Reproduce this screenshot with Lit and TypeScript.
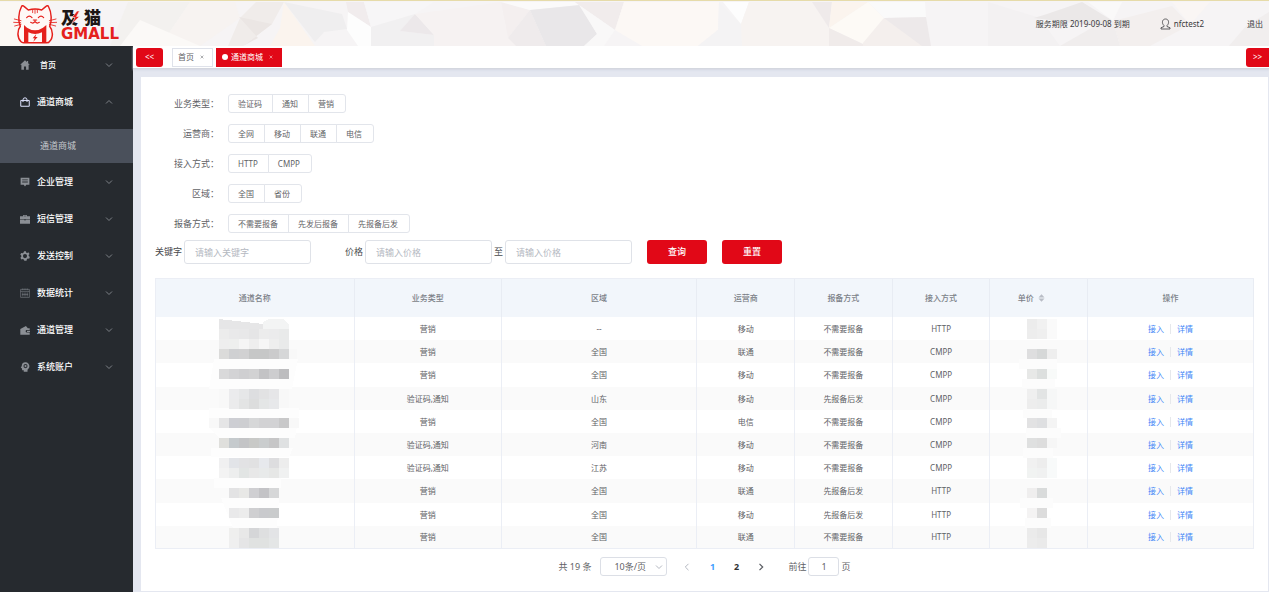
import { LitElement, html, svg, css } from "lit";
import { customElement, state } from "lit/decorators.js";
import { classMap } from "lit/directives/class-map.js";

const chevron = (cls: string) => html`<svg class=${cls} viewBox="0 0 8 8" aria-hidden="true">
  <path d="M1 2.5 L4 5.5 L7 2.5" fill="none" stroke="currentColor" stroke-width="1" />
</svg>`;

const icons = {
  home: svg`<path d="M8 0.5 L0.3 7.5 H2.2 V15.5 H6.3 V10.5 H9.7 V15.5 H13.8 V7.5 H15.7 L13 5 V1.5 H11 V3.2 Z"/>`,
  bag: svg`<path fill="none" stroke="#dfe3ff" stroke-width="1.6" d="M1.2 5.5 H14.8 V14.8 H1.2 Z M4.8 8 V4.5 A3.2 3.2 0 0 1 11.2 4.5 V8"/>`,
  board: svg`<path fill-rule="evenodd" d="M1 1 H15 V12.5 H10 L8 15 L6 12.5 H1 Z M3.5 4 V5.3 H12.5 V4 Z M3.5 7.3 V8.6 H12.5 V7.3 Z"/>`,
  case: svg`<path fill-rule="evenodd" d="M5 3.5 V1.5 H11 V3.5 H16 V8.4 H0 V3.5 Z M6.3 2.6 V3.5 H9.7 V2.6 Z M0 9 H6.5 V10 H9.5 V9 H16 V15.5 H0 Z"/>`,
  gear: svg`<path fill-rule="evenodd" d="M6.5 0.5 H9.5 L10 2.6 L11.6 3.3 L13.4 2.1 L15.2 4.6 L13.7 6.2 L14 8 L15.8 9.4 L14.6 12.2 L12.4 12 L11 13.3 L10.4 15.6 H7 L6 13.5 L4.4 12.7 L2.2 13.4 L0.6 10.8 L2.1 9.2 L2 7.2 L0.4 5.6 L2 3 L4.2 3.4 L5.8 2.5 Z M8 4.8 A3.3 3.3 0 1 0 8 11.4 A3.3 3.3 0 1 0 8 4.8 Z"/>`,
  sheet: svg`<path fill="none" stroke="currentColor" stroke-width="1.1" opacity="0.75" d="M1 2.2 H15 V15 H1 Z M1 5.4 H15 M4.5 0.6 V3.5 M8 0.6 V3.5 M11.5 0.6 V3.5 M4.5 7 V13.5 M8 7 V13.5 M11.5 7 V13.5 M3 10.2 H13"/>`,
  wallet: svg`<path d="M0.500 6.500 L9.5 1.500 L12.5 5 H15.500 V8 H11 A2 2 0 0 0 11 12 H15.500 V15.500 H0.500 Z M11.2 9 H16 V11 H11.2 Z"/>`,
  head: svg`<path fill-rule="evenodd" d="M8.5 0.5 A6 6 0 0 1 15 7 C15 10 12.5 11 12 12.5 V15.5 H6 V13 H3.5 L3 10 L1.2 9.3 L2.8 6.5 A6 6 0 0 1 8.5 0.5 Z M8.8 3.2 A3.3 3.3 0 1 0 8.8 9.8 A3.3 3.3 0 1 0 8.8 3.2 Z M8.8 4.8 A1.7 1.7 0 1 1 8.8 8.2 A1.7 1.7 0 1 1 8.8 4.8 Z"/>`,
};

const menu = [
  { label: "首页", icon: icons.home, compact: true },
  { label: "通道商城", icon: icons.bag, children: ["通道商城"] },
  { label: "企业管理", icon: icons.board },
  { label: "短信管理", icon: icons.case },
  { label: "发送控制", icon: icons.gear },
  { label: "数据统计", icon: icons.sheet },
  { label: "通道管理", icon: icons.wallet },
  { label: "系统账户", icon: icons.head },
] as { label: string; icon: unknown; compact?: boolean; children?: string[] }[];

const filters: [string, string[]][] = [
  ["业务类型：", ["验证码", "通知", "营销"]],
  ["运营商：", ["全网", "移动", "联通", "电信"]],
  ["接入方式：", ["HTTP", "CMPP"]],
  ["区域：", ["全国", "省份"]],
  ["报备方式：", ["不需要报备", "先发后报备", "先报备后发"]],
];

const rows: string[][] = [
  ["营销", "--", "移动", "不需要报备", "HTTP"],
  ["营销", "全国", "联通", "不需要报备", "CMPP"],
  ["营销", "全国", "移动", "不需要报备", "CMPP"],
  ["验证码,通知", "山东", "移动", "先报备后发", "CMPP"],
  ["营销", "全国", "电信", "不需要报备", "CMPP"],
  ["验证码,通知", "河南", "移动", "不需要报备", "CMPP"],
  ["验证码,通知", "江苏", "移动", "不需要报备", "CMPP"],
  ["营销", "全国", "联通", "先报备后发", "HTTP"],
  ["营销", "全国", "移动", "先报备后发", "HTTP"],
  ["营销", "全国", "联通", "不需要报备", "HTTP"],
];

/* Mosaic tiles that mask channel names and prices: [top, colours left to right]. */
type Tiles = [number, string][];
const nameTiles: Tiles = [
  [10, "ececec e9e9ea e8e8e9 e5e5e6 ececec ebebec e9eaea"],
  [20, "eeeeee eeefee f5f5f5 eeeeee f6f6f6 eeeeee e9eaea"],
  [30, "dbdbda cfd0d2 d1d1d2 c6c7c7 c6c7c7 cbcbcc d6d7d8"],
  [50, "d9d9da d3d3d5 cfcfd1 d2d2d3 c3c3c5 cdcdcf bdbdbf"],
  [70, "- ebebed e6e7e8 dddee0 e2e2e3 e6e6e8 -"],
  [80, "- ebebec e3e4e4 dcdddd e4e6e6 e7e8ea -"],
  [99, "e5e5e6 cdced3 cdced1 d6d7d8 d2d2d4 d2d2d4 c8c8c9"],
  [119, "dfdfdc c5cacd c3c4c6 c8c9c7 cacdce c6c6c7 dfe1e2"],
  [139, "f0f0f1 e2e4e8 e2e2e4 e1e1e2 e7e9ed dddddf ededed"],
  [149, "f3f3f3 edeeee e2e5e4 e8e8e8 e8eaea e6e7e6 f0f1f1"],
  [169, "- e3e3e4 e8e8e6 cfcfd2 c3c3c6 d6d7d8 -"],
  [189, "- e9e9ea ececec cfcfd1 c9cacd c9cbcc -"],
  [209, "- efefee e8e8e8 d5d6d8 dedfe0 e3e4e6 -"],
  [219, "- efefef e5e5e6 e0e2e1 e0e2e1 e4e6e6 -"],
];
const priceTiles: Tiles = [
  [0, "ececec f1f1f1 fafafa"],
  [10, "ededed efefef fafafa"],
  [30, "dededf d6d8d8 eeeeee"],
  [50, "e7e8e7 dcdfde f8faf9"],
  [70, "efefef e2e4e4 f6f7f7"],
  [80, "ededed ebecec f6f7f7"],
  [99, "e2e2e3 dedfe1 f4f4f4"],
  [119, "dfe0e0 dddddd f6f6f6"],
  [139, "f1f1f1 ededed f8fafa"],
  [149, "f1f3f2 f0f1f1 f8fafa"],
  [169, "efeeee d9dbdb -"],
  [189, "f4f3f3 dcdcdc -"],
  [209, "ebebeb e7e7e7 -"],
  [219, "ececec eaeaea -"],
];
const tiles = (data: Tiles) =>
  data.map(([y, line]) =>
    line.split(" ").map((c, i) => (c === "-" ? null : svg`<rect x=${10 + i * 10} y=${y} width="10" height="10" fill=${"#" + c} />`)),
  );

const nameMask = html`<svg class="mask mask-name" viewBox="0 0 90 230" aria-hidden="true" shape-rendering="crispEdges">
  <path fill="#fdfdfd" d="M5 40 H89 L83 70 H0 Z M0 89 H90 V95 L86 119 H10 L0 109 Z M2 129 H84 L80 138 H2 Z M5 159 H72 V169 H5 Z M12 179 H70 L68 209 H24 Z" />
  <path fill="#f8f8f8" d="M0 99 H90 V109 H0 Z M80 30 H88 V40 H80 Z M10 70 H80 V89 H10 Z" />
  <path fill="#e6e6e7" d="M10 0 L54 5 V10 H10 Z" />
  <path fill="#f3f4f4" d="M54 10 V3 L60 0 H74 L80 6 V10 Z" />
  ${tiles(nameTiles)}
</svg>`;
const priceMask = html`<svg class="mask mask-price" viewBox="0 0 50 230" aria-hidden="true" shape-rendering="crispEdges">
  <path fill="#fcfcfc" d="M2 40 H40 V50 H2 Z M5 60 H38 V69 H5 Z M6 90 H35 V99 H6 Z M9 109 H44 V119 H9 Z M6 129 H36 V139 H6 Z M3 179 H36 V189 H3 Z M8 199 H34 V209 H8 Z" />
  ${tiles(priceTiles)}
</svg>`;

const facets: [string, string][] = [
  ["#fbf8f4", "0,2 45,2 30,46 0,46"],
  ["#f3f1ef", "128,2 190,2 160,46 110,46"],
  ["#f7f3f1", "190,2 235,2 240,18 200,46 160,46"],
  ["#fbf9f7", "140,20 200,46 120,46"],
  ["#f0ecea", "240,18 256,2 284,2 272,24 243,46 228,46"],
  ["#ebe6e4", "239,17 272,24 243,46 258,38"],
  ["#fbf4ee", "284,2 280,28 270,46 315,46"],
  ["#efeeef", "284,2 342,14 347,29 324,32 315,42"],
  ["#f1eced", "346,2 364,2 371,27 348,12"],
  ["#fdfdfd", "348,12 371,27 371,46 358,46 347,30"],
  ["#f7f6f7", "364,2 434,2 415,14 371,27"],
  ["#f1f0f1", "371,27 415,14 400,31 434,35 434,46 371,46"],
  ["#ece8ea", "415,14 434,35 400,31"],
  ["#f6f2f2", "415,14 501,2 508,38 516,46 434,46 434,35"],
  ["#f4efef", "501,2 530,10 508,38"],
  ["#fbfafa", "501,2 575,2 579,5 530,10"],
  ["#efebec", "530,10 546,46 516,46 508,38"],
  ["#e9e7e9", "530,10 580,5 597,34 584,46 546,46"],
  ["#f1ecec", "575,2 624,2 615,30 579,5"],
  ["#f9f8f8", "579,5 615,30 604,46 584,46 597,34"],
  ["#fcf8f5", "624,2 719,2 718,30 698,46 642,46 615,30"],
  ["#f4f3f4", "719,2 741,24 742,46 698,46 718,30"],
  ["#fdfdfd", "723,2 749,2 741,24"],
  ["#f7f3f1", "749,2 812,2 829,28 829,46 742,46 741,24"],
  ["#efeaea", "812,2 832,2 829,28"],
  ["#fbf4ee", "832,2 868,2 829,28"],
  ["#fdfaf6", "868,2 884,18 863,44 829,28"],
  ["#f0ebea", "829,28 863,44 863,46 829,46"],
  ["#f4efed", "884,18 926,46 863,46 863,43"],
  ["#fafafa", "868,2 925,2 926,17 884,18"],
  ["#ede9ea", "884,18 926,17 931,46 922,46"],
  ["#f3f1f2", "988,2 1040,18 1060,46 988,46"],
  ["#ebe8e8", "1047,14 1082,2 1113,21 1095,26 1034,18"],
  ["#faf9f9", "1088,2 1122,2 1113,21"],
  ["#f3efee", "1113,21 1172,6 1190,25 1150,46 1120,46"],
  ["#f0eded", "1095,26 1113,21 1120,46 1060,46"],
  ["#faf6f4", "1172,2 1210,2 1190,25"],
  ["#f1eeee", "1229,46 1246,26 1269,12 1269,46"],
];

@customElement("app-root")
export class AppRoot extends LitElement {
  @state() private picked: Record<string, string> = {};
  @state() private opened = "通道商城";

  static styles = css`
    :host {
      display: flex;
      flex-direction: column;
      min-height: 100vh;
      background: #e4e7f0;
      color: #5f6266;
      font: 9px/12px "Noto Sans", "Noto Sans CJK SC", sans-serif;
    }
    * { box-sizing: border-box; }
    button, input, select { font: inherit; color: inherit; margin: 0; padding: 0; }
    button { cursor: pointer; }
    a { text-decoration: none; color: inherit; }
    svg { display: block; flex: none; }

    .header {
      position: relative;
      display: flex;
      align-items: center;
      justify-content: space-between;
      height: 46px;
      padding: 0 6px 0 13px;
      border-top: 1px solid #e6dba9;
      background: #f6f4f5;
      font-size: 8px;
      color: #3a3a3c;
    }
    .backdrop { position: absolute; inset: 0; width: 100%; height: 100%; }
    .brand { position: relative; display: flex; align-items: center; gap: 4px; }
    .cat { width: 44px; height: 42px; }
    .brand-text { display: flex; flex-direction: column; }
    .brand-cn { position: relative; display: flex; gap: 6px; font: 900 17px/20px "Noto Sans CJK SC", sans-serif; color: #1d1715; }
    .bolt { position: absolute; left: 10px; top: 4px; width: 9px; height: 13px; }
    .brand-en { font: bold 15px/14px "DejaVu Sans", sans-serif; color: #e5201c; }
    .account { position: relative; display: flex; align-items: center; }
    .user { display: flex; align-items: center; gap: 3px; margin: 0 43px 0 30px; }
    .user-icon { width: 11px; height: 12px; }

    .body { flex: 1; display: flex; }
    .side { flex: none; width: 133px; background: #262a2f; color: #fff; }
    .item {
      display: flex;
      align-items: center;
      gap: 7px;
      width: 100%;
      height: 37px;
      padding: 0 20px;
      border: 0;
      background: none;
      text-align: left;
      font-weight: 500;
    }
    .item.compact { gap: 10px; font-size: 8px; }
    .item-icon { width: 10px; height: 10px; color: #8b8f95; fill: currentColor; }
    .item-label { flex: 1; }
    .arrow { width: 8px; height: 8px; color: #7d8187; }
    .arrow.up { transform: rotate(180deg); }
    .sub { padding-top: 9px; }
    .sub-link {
      display: flex;
      align-items: center;
      height: 34px;
      padding-left: 40px;
      background: #4a505b;
      color: #c6c9ce;
    }

    .main { flex: 1; min-width: 0; display: flex; flex-direction: column; }
    .tabs {
      display: flex;
      align-items: center;
      height: 23px;
      padding-left: 3px;
      background: #fff;
      border-bottom: 1px solid #d4d7df;
      box-shadow: 0 1px 2px #d3d7e2;
      font-size: 8px;
    }
    .scroll { height: 19px; width: 27px; border: 0; border-radius: 3px; background: #e10817; color: #fff; }
    .scroll.next { width: 23px; margin-left: auto; border-radius: 3px 0 0 3px; }
    .tab {
      display: flex;
      align-items: center;
      gap: 6px;
      height: 19px;
      padding: 0 8px 0 5px;
      border: 1px solid #dfe2ea;
      background: #fff;
    }
    .tab.first { margin: 0 3px 0 9px; }
    .tab.active { border-color: #e10817; background: #e10817; color: #fff; }
    .dot { width: 6px; height: 6px; border-radius: 50%; background: #fff; margin-right: -3px; }
    .close { width: 4px; height: 4px; opacity: 0.7; }

    .panel {
      flex: 1;
      margin: 8px 1px 1px 8px;
      padding: 17px 14px 14px;
      background: #fff;
    }
    .filters { display: grid; gap: 11px; }
    .filter { display: flex; align-items: center; gap: 9px; height: 19px; }
    .filter-name { width: 64px; text-align: right; }
    .group { display: flex; font-size: 8px; }
    .choice {
      height: 19px;
      padding: 0 10px 0 9px;
      border: 1px solid #e2e5eb;
      margin-left: -1px;
      background: #fff;
    }
    .choice:first-child { margin-left: 0; border-radius: 3px 0 0 3px; }
    .choice:last-child { padding-right: 11px; border-radius: 0 3px 3px 0; }
    .choice.on { color: #e10817; }

    .search { display: flex; align-items: center; margin-top: 7px; color: #48494c; }
    .field { display: flex; align-items: center; gap: 2px; }
    .field.price { margin-left: 34px; }
    .text {
      width: 127px;
      height: 24px;
      padding: 0 10px;
      border: 1px solid #dfe2e8;
      border-radius: 3px;
      background: #fff;
      outline: none;
    }
    .text::placeholder { color: #b4b8c1; opacity: 1; }
    .action { width: 60px; height: 24px; margin-left: 15px; border: 0; border-radius: 3px; background: #e10817; color: #fff; font-weight: 500; }

    .grid {
      width: 100%;
      margin-top: 14px;
      table-layout: fixed;
      border-collapse: separate;
      border-spacing: 0;
      border: 1px solid #ebeef5;
      border-width: 1px 0 0 1px;
      font-size: 8px;
      text-align: center;
    }
    .grid th { height: 38px; padding: 0; background: #f2f6fb; color: #7b7f87; font-weight: 500; border-right: 1px solid #e8ecf3; }
    .grid td { height: 23px; padding: 0; border-right: 1px solid #ebeef5; }
    .grid tr:nth-child(5n + 3) td { height: 24px; }
    .grid tbody tr:nth-child(even) td { background: #fafafa; }
    .grid tbody tr:last-child td { border-bottom: 1px solid #ebeef5; }
    .grid td.masked { position: relative; }
    .w-name { width: 18.1%; }
    .w-type { width: 13.4%; }
    .w-area { width: 17.8%; }
    .w-std { width: 8.9%; }
    .sortable { display: flex; align-items: center; justify-content: center; gap: 4px; }
    .sort { width: 7px; height: 8px; margin-right: 15px; color: #b9bdc6; }
    .ops { display: flex; align-items: center; justify-content: center; gap: 6px; color: #3f86f7; }
    .ops-line { width: 1px; height: 10px; background: #e6e8ec; }
    .mask { position: absolute; top: 2px; left: 50%; height: 230px; }
    .mask-name { width: 90px; margin-left: -46px; }
    .mask-price { width: 50px; margin-left: -22px; }

    .pager { display: flex; align-items: center; justify-content: center; margin-top: 8px; height: 19px; }
    .size { position: relative; display: flex; align-items: center; margin: 0 7px 0 9px; }
    .size-select {
      appearance: none;
      width: 67px;
      height: 19px;
      padding: 0 13px;
      border: 1px solid #dcdfe6;
      border-radius: 3px;
      background: #fff;
    }
    .size .arrow { position: absolute; right: 4px; color: #b4b8c1; pointer-events: none; }
    .page { width: 24px; height: 19px; border: 0; background: none; font-weight: bold; color: #303133; }
    .page.current { color: #409eff; }
    .page.step { display: flex; align-items: center; justify-content: center; width: 26px; color: #5a5d63; }
    .page.step.off { color: #b4b8c1; }
    .step-icon { width: 8px; height: 8px; }
    .jump { display: flex; align-items: center; gap: 2px; margin-left: 14px; }
    .jump-input { width: 31px; height: 19px; border: 1px solid #dcdfe6; border-radius: 3px; text-align: center; background: #fff; outline: none; }
  `;

  private pick(group: string, value: string) {
    this.picked = { ...this.picked, [group]: this.picked[group] === value ? "" : value };
  }

  private renderHeader() {
    return html`<header class="header">
      <svg class="backdrop" viewBox="0 1 1269 45" preserveAspectRatio="none" aria-hidden="true">
        ${facets.map(([fill, points]) => svg`<polygon fill=${fill} points=${points} />`)}
      </svg>
      <div class="brand">
        <svg class="cat" viewBox="38 9 132 120" aria-hidden="true">
          <g fill="none" stroke="#e5201c" stroke-width="4.5" stroke-linecap="round" stroke-linejoin="round">
            <path fill="#fff8f6" d="M62 122 C50 110 50 88 60 76 C53 62 54 34 63 18 C64 14 68 13 71 16 L84 27 C97 23 112 23 124 27 L137 16 C140 13 144 14 145 18 C154 34 155 62 148 76 C158 88 160 110 147 122 Q146 125 138 125 H70 Q64 125 62 122 Z" />
            <path stroke-width="3.5" d="M79 50 Q87 41 95 50 M114 50 Q122 41 130 50 M99 57 H109 M104 58 V62 Q98 69 91 64 M104 62 Q110 69 117 64" />
            <path stroke-width="2.5" d="M42 54 L62 59 M40 64 L61 65 M43 75 L62 70 M167 54 L147 59 M169 64 L148 65 M166 75 L147 70 M97 27 V35 M104 26 V37 M111 27 V35" />
          </g>
          <path fill="#e5201c" d="M71 125 V72 L80 80 Q104 96 128 80 L138 72 V125 H125 V94 Q104 104 84 94 V125 Z" />
          <path fill="#e5201c" d="M108 99 L97 112 H103 L99 122 L112 108 H105 Z" />
        </svg>
        <div class="brand-text">
          <span class="brand-cn">
            <span>及</span><span>猫</span>
            <svg class="bolt" viewBox="0 0 9 13" aria-hidden="true"><path fill="#e5201c" stroke="#f8f5f3" stroke-width="0.600" d="M6 0 L1 6.500 H4 L0.500 13 L8.500 5.500 H5.500 L8.500 0 Z" /></svg>
          </span>
          <span class="brand-en">GMALL</span>
        </div>
      </div>
      <div class="account">
        <span>服务期限 2019-09-08 到期</span>
        <a class="user" href="#">
          <svg class="user-icon" viewBox="0 0 22 24" aria-hidden="true">
            <path fill="none" stroke="#3a3a3c" stroke-width="1.6" d="M8 15 C3 11 4 2 11 2 C18 2 19 11 14 15 V17 L20 19.500 V22 H2 V19.500 L8 17 Z" />
          </svg>
          <span>nfctest2</span>
        </a>
        <a href="#">退出</a>
      </div>
    </header>`;
  }

  private renderSide() {
    return html`<nav class="side">
      ${menu.map((m) => {
        const open = this.opened === m.label;
        return html`<button
            class=${classMap({ item: true, compact: !!m.compact })}
            aria-expanded=${open}
            @click=${() => (this.opened = open ? "" : m.label)}
          >
            <svg class="item-icon" viewBox="0 0 16 16" aria-hidden="true">${m.icon}</svg>
            <span class="item-label">${m.label}</span>
            ${chevron(open ? "arrow up" : "arrow")}
          </button>
          ${open && m.children
            ? html`<div class="sub">${m.children.map((c) => html`<a class="sub-link" href="#">${c}</a>`)}</div>`
            : null}`;
      })}
    </nav>`;
  }

  private renderTable() {
    return html`<table class="grid">
      <colgroup>
        <col class="w-name" /><col class="w-type" /><col class="w-area" />
        <col class="w-std" /><col class="w-std" /><col class="w-std" /><col class="w-std" /><col />
      </colgroup>
      <thead>
        <tr>
          ${["通道名称", "业务类型", "区域", "运营商", "报备方式", "接入方式"].map((h) => html`<th scope="col">${h}</th>`)}
          <th scope="col">
            <span class="sortable">单价
              <svg class="sort" viewBox="0 0 7 8" aria-hidden="true"><path fill="currentColor" d="M0.500 3.400 L3.500 0.200 L6.500 3.400 Z M0.500 4.600 L3.500 7.800 L6.500 4.600 Z" /></svg>
            </span>
          </th>
          <th scope="col">操作</th>
        </tr>
      </thead>
      <tbody>
        ${rows.map(
          (r, i) => html`<tr>
            <td class=${i === 0 ? "masked" : ""}>${i === 0 ? nameMask : null}</td>
            ${r.map((c) => html`<td>${c}</td>`)}
            <td class=${i === 0 ? "masked" : ""}>${i === 0 ? priceMask : null}</td>
            <td><span class="ops"><a href="#">接入</a><span class="ops-line"></span><a href="#">详情</a></span></td>
          </tr>`,
        )}
      </tbody>
    </table>`;
  }

  private renderPager() {
    return html`<div class="pager">
      <span>共 19 条</span>
      <span class="size">
        <select class="size-select" aria-label="每页条数"><option>10条/页</option><option>20条/页</option></select>
        ${chevron("arrow")}
      </span>
      <button class="page step off" aria-label="上一页">
        <svg class="step-icon" viewBox="0 0 8 8"><path d="M5.500 0.800 L2.300 4 L5.500 7.200" fill="none" stroke="currentColor" /></svg>
      </button>
      <button class="page current">1</button>
      <button class="page">2</button>
      <button class="page step" aria-label="下一页">
        <svg class="step-icon" viewBox="0 0 8 8"><path d="M2.500 0.800 L5.700 4 L2.500 7.200" fill="none" stroke="currentColor" stroke-width="1.200" /></svg>
      </button>
      <span class="jump">
        <label for="jump">前往</label>
        <input id="jump" class="jump-input" type="text" .value=${"1"} />
        <span>页</span>
      </span>
    </div>`;
  }

  render() {
    const close = html`<svg class="close" viewBox="0 0 5 5" aria-hidden="true"><path d="M0.800 0.800 L4.200 4.200 M4.200 0.800 L0.800 4.200" stroke="currentColor" stroke-width="0.900" /></svg>`;
    return html`
      ${this.renderHeader()}
      <div class="body">
        ${this.renderSide()}
        <main class="main">
          <div class="tabs">
            <button class="scroll">&lt;&lt;</button>
            <button class="tab first"><span>首页</span>${close}</button>
            <button class="tab active"><span class="dot"></span><span>通道商城</span>${close}</button>
            <button class="scroll next">&gt;&gt;</button>
          </div>
          <section class="panel">
            <div class="filters">
              ${filters.map(
                ([name, options]) => html`<div class="filter" role="group" aria-label=${name}>
                  <span class="filter-name">${name}</span>
                  <div class="group">
                    ${options.map(
                      (o) => html`<button
                        class=${classMap({ choice: true, on: this.picked[name] === o })}
                        @click=${() => this.pick(name, o)}
                      >${o}</button>`,
                    )}
                  </div>
                </div>`,
              )}
            </div>
            <form class="search" @submit=${(e: Event) => e.preventDefault()}>
              <div class="field">
                <label for="keyword">关键字</label>
                <input id="keyword" class="text" type="text" placeholder="请输入关键字" />
              </div>
              <div class="field price">
                <label for="low">价格</label>
                <input id="low" class="text" type="text" placeholder="请输入价格" />
                <label for="high">至</label>
                <input id="high" class="text" type="text" placeholder="请输入价格" />
              </div>
              <button class="action" type="submit">查询</button>
              <button class="action" type="reset">重置</button>
            </form>
            ${this.renderTable()} ${this.renderPager()}
          </section>
        </main>
      </div>
    `;
  }
}
